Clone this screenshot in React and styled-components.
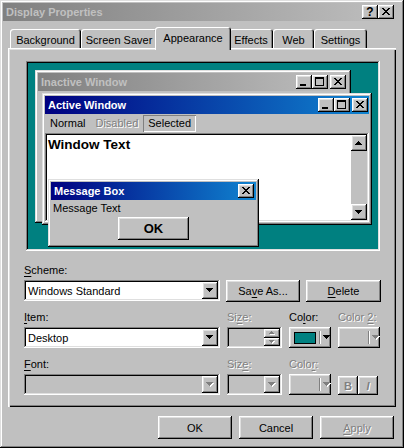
import React from 'react';
import styled, { createGlobalStyle, css } from 'styled-components';

const GlobalStyle = createGlobalStyle`
  * { box-sizing: border-box; }
  html, body { margin: 0; padding: 0; background: #c0c0c0; }
  body {
    font-family: "Liberation Sans", Arial, sans-serif;
    font-size: 11px;
    color: #000;
  }
  u { text-decoration-thickness: 1px; text-underline-offset: 2px; }
`;

const raised = css`
  box-shadow: inset -1px -1px #000, inset 1px 1px #fff, inset -2px -2px #808080, inset 2px 2px #dfdfdf;
`;

const sunken = css`
  box-shadow: inset -1px -1px #fff, inset 1px 1px #808080, inset -2px -2px #dfdfdf, inset 2px 2px #000;
`;

const frame = css`
  box-shadow: inset -1px -1px #000, inset 1px 1px #dfdfdf, inset -2px -2px #808080, inset 2px 2px #fff;
`;

const greyed = css`
  color: #808080;
  text-shadow: 1px 1px 0 #fff;
`;

// little pixel glyphs, X = lit pixel
const GLYPHS = {
  close: ['XX....XX', '.XX..XX.', '..XXXX..', '...XX...', '..XXXX..', '.XX..XX.', 'XX....XX'],
  min: ['........', '........', '........', '........', '........', '........', '........', 'XXXXXX..', 'XXXXXX..'],
  max: ['XXXXXXXXX', 'XXXXXXXXX', 'X.......X', 'X.......X', 'X.......X', 'X.......X', 'X.......X', 'X.......X', 'XXXXXXXXX'],
  down: ['XXXXXXX', '.XXXXX.', '..XXX..', '...X...'],
  up: ['...X...', '..XXX..', '.XXXXX.', 'XXXXXXX'],
  spinUp: ['..X..', '.XXX.', 'XXXXX'],
  spinDown: ['XXXXX', '.XXX.', '..X..'],
};

const GlyphSvg = styled.svg`
  display: block;
  flex: none;
`;

function Glyph({ name, disabled }) {
  const rows = GLYPHS[name];
  const d = rows
    .flatMap((row, y) => [...row].map((c, x) => (c === 'X' ? `M${x} ${y}h1v1h-1z` : '')))
    .join('');
  const w = rows[0].length + 1;
  const h = rows.length + 1;
  return (
    <GlyphSvg width={w} height={h} viewBox={`0 0 ${w} ${h}`} shapeRendering="crispEdges">
      {disabled && <path d={d} fill="#fff" transform="translate(1 1)" />}
      <path d={d} fill={disabled ? '#808080' : '#000'} />
    </GlyphSvg>
  );
}

const Dialog = styled.div`
  width: 404px;
  height: 448px;
  padding: 3px;
  background: #c0c0c0;
  display: flex;
  flex-direction: column;
  ${frame}
`;

const TitleBar = styled.div`
  flex: none;
  height: 18px;
  display: flex;
  align-items: center;
  padding: 0 ${({ $pad }) => $pad}px 0 3px;
  background: ${({ $active }) =>
    $active ? 'linear-gradient(90deg, #000080, #1084d0)' : 'linear-gradient(90deg, #808080, #c0c0c0)'};
  color: ${({ $active }) => ($active ? '#fff' : '#c0c0c0')};
  font-weight: bold;
  white-space: nowrap;
`;

const TitleText = styled.div`
  flex: 1;
  overflow: hidden;
`;

const CaptionButton = styled.div`
  width: 16px;
  height: 14px;
  margin-left: ${({ $gap }) => $gap || 0}px;
  display: flex;
  align-items: center;
  justify-content: center;
  background: #c0c0c0;
  color: #000;
  font-size: 12px;
  font-weight: bold;
  line-height: 1;
  ${raised}
`;

const Body = styled.div`
  display: flex;
  flex-direction: column;
  padding: 6px 5px 0;
`;

const TabRow = styled.div`
  height: 21px;
  display: flex;
  align-items: flex-start;
  padding-left: 2px;
  position: relative;
  z-index: 1;
`;

const Tab = styled.div`
  flex: none;
  width: ${({ $w, $selected }) => ($selected ? $w + 4 : $w)}px;
  height: ${({ $selected }) => ($selected ? 23 : 19)}px;
  margin: ${({ $selected }) => ($selected ? '0 -2px' : '2px 0 0')};
  padding-top: 4px;
  line-height: 14px;
  text-align: center;
  white-space: nowrap;
  background: #c0c0c0;
  border-radius: 3px 3px 0 0;
  position: relative;
  z-index: ${({ $selected }) => ($selected ? 2 : 1)};
  box-shadow: inset 1px 1px #fff, inset -1px 0 #000, inset -2px 0 #808080;
`;

const Panel = styled.div`
  height: 359px;
  padding: 13px 15px 0 16px;
  background: #c0c0c0;
  box-shadow: inset 1px 1px #fff, inset 2px 2px #dfdfdf, inset -1px -1px #000, inset -2px -2px #808080;
`;

const Preview = styled.div`
  position: relative;
  width: 354px;
  height: 190px;
  margin-left: 2px;
  background: #008080;
  ${sunken}
`;

const MiniWindow = styled.div`
  position: absolute;
  left: ${({ $x }) => $x}px;
  top: ${({ $y }) => $y}px;
  width: ${({ $w }) => $w}px;
  height: ${({ $h }) => $h}px;
  padding: 3px;
  display: flex;
  flex-direction: column;
  background: #c0c0c0;
  ${frame}
`;

const MenuBar = styled.div`
  height: 19px;
  display: flex;
  align-items: center;
`;

const MenuItem = styled.div`
  height: 17px;
  line-height: 17px;
  padding: 0 5px;
  ${({ $disabled }) => $disabled && greyed}
  box-shadow: ${({ $selected }) => ($selected ? 'inset 1px 1px #808080, inset -1px -1px #fff' : 'none')};
`;

const ClientArea = styled.div`
  flex: 1;
  display: flex;
  padding: 2px;
  background: #fff;
  ${sunken}
`;

const WindowText = styled.div`
  flex: 1;
  padding: 2px 1px;
  font-size: 13.5px;
  font-weight: bold;
`;

const ScrollBar = styled.div`
  width: 16px;
  display: flex;
  flex-direction: column;
  justify-content: space-between;
  background: #c0c0c0;
`;

const ScrollButton = styled.div`
  height: 16px;
  display: flex;
  align-items: center;
  justify-content: center;
  background: #c0c0c0;
  ${raised}
`;

const MessageText = styled.div`
  height: 16px;
  line-height: 16px;
  padding-left: 2px;
`;

const OkButton = styled.div`
  align-self: center;
  width: 71px;
  height: 23px;
  margin-top: 1px;
  display: flex;
  align-items: center;
  justify-content: center;
  font-size: 13px;
  font-weight: bold;
  ${raised}
`;

const Field = styled.div`
  display: flex;
  flex-direction: column;
  margin-top: ${({ $top }) => $top || 0}px;
`;

const Label = styled.div`
  height: 14px;
  line-height: 14px;
  margin-bottom: 3px;
  white-space: nowrap;
  ${({ $disabled }) => $disabled && greyed}
`;

const Row = styled.div`
  display: flex;
  align-items: flex-start;
  gap: ${({ $gap }) => $gap}px;
  margin-top: ${({ $top }) => $top || 0}px;
`;

const Combo = styled.div`
  width: ${({ $w }) => $w}px;
  height: 21px;
  display: flex;
  align-items: center;
  padding: 2px;
  background: ${({ $disabled }) => ($disabled ? '#c0c0c0' : '#fff')};
  ${sunken}
`;

const ComboValue = styled.span`
  flex: 1;
  padding-left: 2px;
  white-space: nowrap;
  overflow: hidden;
`;

const DropButton = styled.span`
  flex: none;
  width: 16px;
  height: 17px;
  display: flex;
  align-items: center;
  justify-content: center;
  background: #c0c0c0;
  ${raised}
`;

const SpinButtons = styled.div`
  margin-left: auto;
  width: 16px;
  height: 17px;
  display: flex;
  flex-direction: column;
`;

const SpinButton = styled.span`
  flex: 1;
  display: flex;
  align-items: center;
  justify-content: center;
  background: #c0c0c0;
  ${raised}
`;

const ColorButton = styled.div`
  width: 42px;
  height: 21px;
  display: flex;
  align-items: center;
  padding-left: 5px;
  background: #c0c0c0;
  ${raised}
`;

const Swatch = styled.span`
  flex: none;
  width: 22px;
  height: 12px;
  background: ${({ $color }) => $color || 'transparent'};
  border: 1px solid ${({ $color }) => ($color ? '#000' : 'transparent')};
`;

const Divider = styled.span`
  flex: none;
  width: 2px;
  height: 13px;
  margin: 0 2px 0 3px;
  border-left: 1px solid #808080;
  border-right: 1px solid #fff;
`;

const StyleButtons = styled.div`
  display: flex;
  height: 21px;
  align-items: flex-end;
`;

const StyleButton = styled.div`
  width: 20px;
  height: 19px;
  display: flex;
  align-items: center;
  justify-content: center;
  font-weight: bold;
  font-style: ${({ $italic }) => ($italic ? 'italic' : 'normal')};
  background: #c0c0c0;
  ${raised}
  ${greyed}
`;

const Button = styled.div`
  width: ${({ $w }) => $w}px;
  height: ${({ $h }) => $h || 23}px;
  display: flex;
  align-items: center;
  justify-content: center;
  background: #c0c0c0;
  white-space: nowrap;
  ${raised}
  ${({ $disabled }) => $disabled && greyed}
`;

const ButtonRow = styled.div`
  display: flex;
  justify-content: flex-end;
  gap: 7px;
  margin-top: 9px;
  padding-right: 2px;
`;

function ComboBox({ w, value, disabled }) {
  return (
    <Combo $w={w} $disabled={disabled}>
      <ComboValue>{value}</ComboValue>
      <DropButton>
        <Glyph name="down" disabled={disabled} />
      </DropButton>
    </Combo>
  );
}

function SpinBox() {
  return (
    <Combo $w={55} $disabled>
      <SpinButtons>
        <SpinButton>
          <Glyph name="spinUp" disabled />
        </SpinButton>
        <SpinButton>
          <Glyph name="spinDown" disabled />
        </SpinButton>
      </SpinButtons>
    </Combo>
  );
}

function ColorPicker({ color, disabled }) {
  return (
    <ColorButton>
      <Swatch $color={color} />
      <Divider />
      <Glyph name="down" disabled={disabled} />
    </ColorButton>
  );
}

const tabs = [
  { label: 'Background', w: 71 },
  { label: 'Screen Saver', w: 76 },
  { label: 'Appearance', w: 72, selected: true },
  { label: 'Effects', w: 44 },
  { label: 'Web', w: 41 },
  { label: 'Settings', w: 53 },
];

export default function App() {
  return (
    <>
      <GlobalStyle />
      <Dialog>
        <TitleBar $pad={7}>
          <TitleText>Display Properties</TitleText>
          <CaptionButton>?</CaptionButton>
          <CaptionButton>
            <Glyph name="close" />
          </CaptionButton>
        </TitleBar>

        <Body>
          <TabRow>
            {tabs.map((t) => (
              <Tab key={t.label} $w={t.w} $selected={t.selected}>
                {t.label}
              </Tab>
            ))}
          </TabRow>

          <Panel>
            <Preview>
              <MiniWindow $x={9} $y={9} $w={316} $h={153}>
                <TitleBar $pad={2}>
                  <TitleText>Inactive Window</TitleText>
                  <CaptionButton>
                    <Glyph name="min" />
                  </CaptionButton>
                  <CaptionButton>
                    <Glyph name="max" />
                  </CaptionButton>
                  <CaptionButton $gap={2}>
                    <Glyph name="close" />
                  </CaptionButton>
                </TitleBar>
              </MiniWindow>

              <MiniWindow $x={16} $y={32} $w={330} $h={132}>
                <TitleBar $active $pad={1}>
                  <TitleText>Active Window</TitleText>
                  <CaptionButton>
                    <Glyph name="min" />
                  </CaptionButton>
                  <CaptionButton>
                    <Glyph name="max" />
                  </CaptionButton>
                  <CaptionButton $gap={2}>
                    <Glyph name="close" />
                  </CaptionButton>
                </TitleBar>
                <MenuBar>
                  <MenuItem>Normal</MenuItem>
                  <MenuItem $disabled>Disabled</MenuItem>
                  <MenuItem $selected>Selected</MenuItem>
                </MenuBar>
                <ClientArea>
                  <WindowText>Window Text</WindowText>
                  <ScrollBar>
                    <ScrollButton>
                      <Glyph name="up" />
                    </ScrollButton>
                    <ScrollButton>
                      <Glyph name="down" />
                    </ScrollButton>
                  </ScrollBar>
                </ClientArea>
              </MiniWindow>

              <MiniWindow $x={22} $y={118} $w={211} $h={68}>
                <TitleBar $active $pad={2}>
                  <TitleText>Message Box</TitleText>
                  <CaptionButton>
                    <Glyph name="close" />
                  </CaptionButton>
                </TitleBar>
                <MessageText>Message Text</MessageText>
                <OkButton>OK</OkButton>
              </MiniWindow>
            </Preview>

            <Field $top={12}>
              <Label>
                <u>S</u>cheme:
              </Label>
              <Row $gap={6}>
                <ComboBox w={196} value="Windows Standard" />
                <Button $w={74} $h={22}>
                  Sa<u>v</u>e As...
                </Button>
                <Button $w={75} $h={22}>
                  <u>D</u>elete
                </Button>
              </Row>
            </Field>

            <Row $gap={7} $top={8}>
              <Field>
                <Label>
                  <u>I</u>tem:
                </Label>
                <ComboBox w={196} value="Desktop" />
              </Field>
              <Field>
                <Label $disabled>
                  Si<u>z</u>e:
                </Label>
                <SpinBox />
              </Field>
              <Field>
                <Label>
                  Co<u>l</u>or:
                </Label>
                <ColorPicker color="#008080" />
              </Field>
              <Field>
                <Label $disabled>
                  Color <u>2</u>:
                </Label>
                <ColorPicker disabled />
              </Field>
            </Row>

            <Row $gap={7} $top={9}>
              <Field>
                <Label>
                  <u>F</u>ont:
                </Label>
                <ComboBox w={196} disabled />
              </Field>
              <Field>
                <Label $disabled>
                  Siz<u>e</u>:
                </Label>
                <ComboBox w={55} disabled />
              </Field>
              <Field>
                <Label $disabled>
                  Colo<u>r</u>:
                </Label>
                <ColorPicker disabled />
              </Field>
              <Field>
                <Label />
                <StyleButtons>
                  <StyleButton>B</StyleButton>
                  <StyleButton $italic>I</StyleButton>
                </StyleButtons>
              </Field>
            </Row>
          </Panel>

          <ButtonRow>
            <Button $w={74}>OK</Button>
            <Button $w={74}>Cancel</Button>
            <Button $w={74} $disabled>
              <u>A</u>pply
            </Button>
          </ButtonRow>
        </Body>
      </Dialog>
    </>
  );
}
